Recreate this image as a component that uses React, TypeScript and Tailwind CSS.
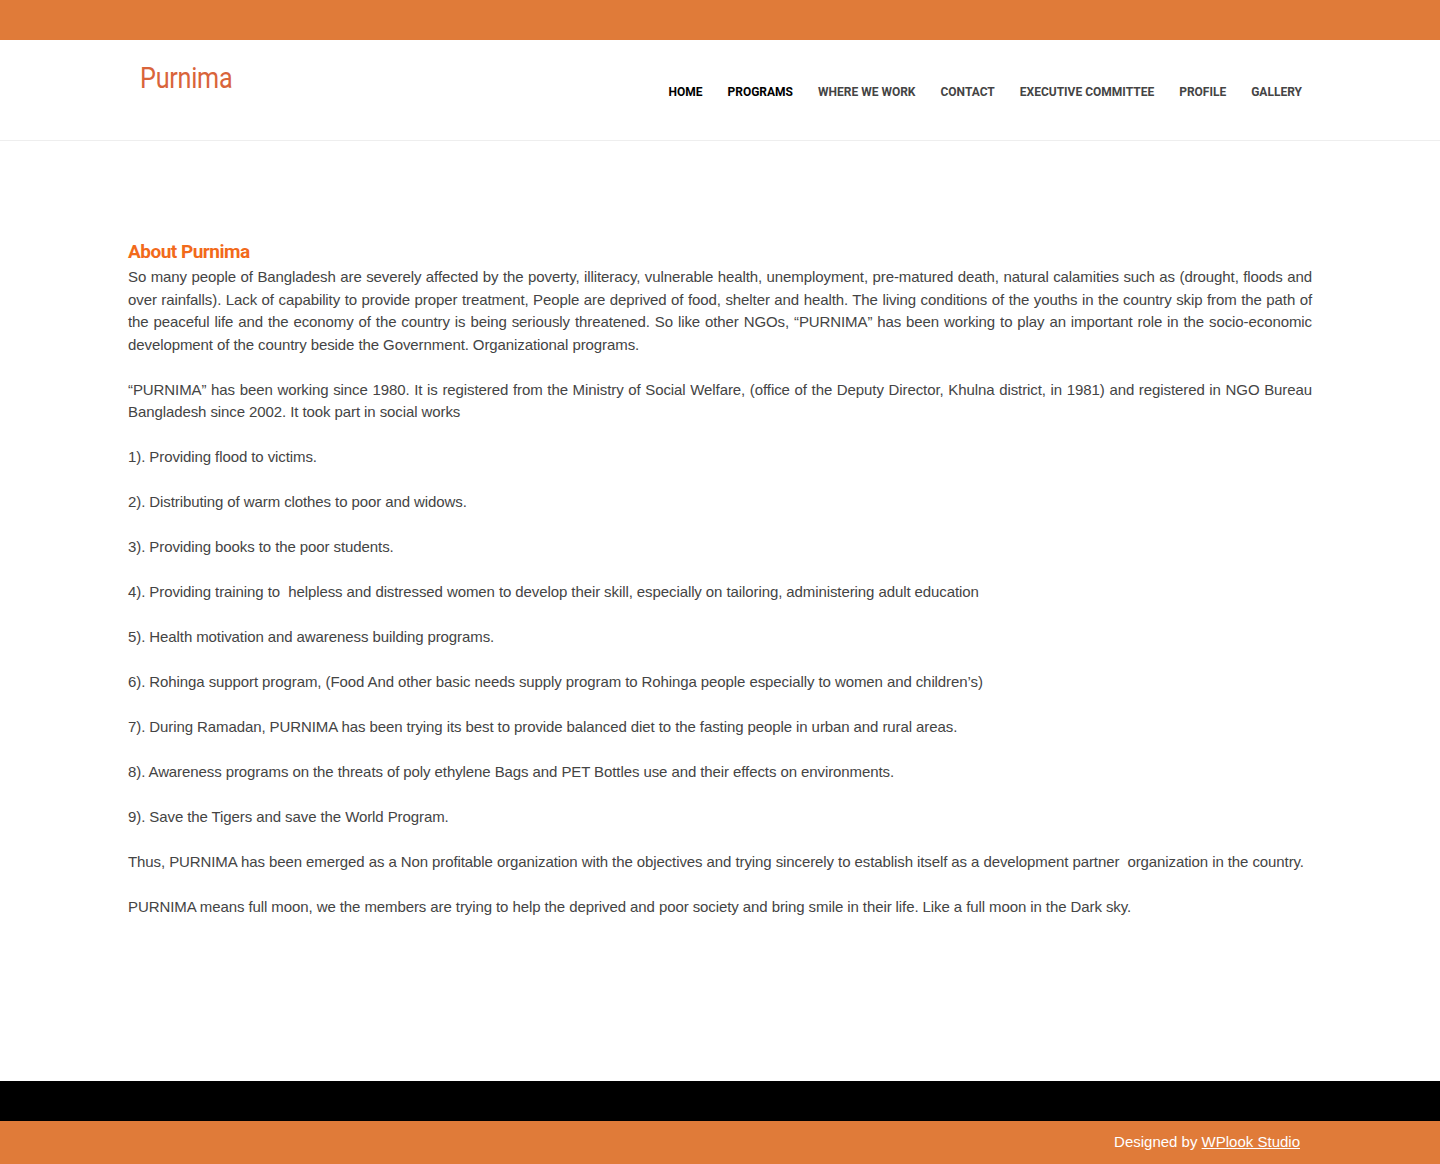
const NAV = [
  { label: "HOME", active: true },
  { label: "PROGRAMS", active: true },
  { label: "WHERE WE WORK" },
  { label: "CONTACT" },
  { label: "EXECUTIVE COMMITTEE" },
  { label: "PROFILE" },
  { label: "GALLERY" },
];

const PARAGRAPHS = [
  "So many people of Bangladesh are severely affected by the poverty, illiteracy, vulnerable health, unemployment, pre-matured death, natural calamities such as (drought, floods and over rainfalls). Lack of capability to provide proper treatment, People are deprived of food, shelter and health. The living conditions of the youths in the country skip from the path of the peaceful life and the economy of the country is being seriously threatened. So like other NGOs, \u201cPURNIMA\u201d has been working to play an important role in the socio-economic development of the country beside the Government. Organizational programs.",
  "\u201cPURNIMA\u201d has been working since 1980. It is registered from the Ministry of Social Welfare, (office of the Deputy Director, Khulna district, in 1981) and registered in NGO Bureau Bangladesh since 2002. It took part in social works",
  "1). Providing flood to victims.",
  "2). Distributing of warm clothes to poor and widows.",
  "3). Providing books to the poor students.",
  "4). Providing training to \u00a0helpless and distressed women to develop their skill, especially on tailoring, administering adult education",
  "5). Health motivation and awareness building programs.",
  "6). Rohinga support program, (Food And other basic needs supply program to Rohinga people especially to women and children\u2019s)",
  "7). During Ramadan, PURNIMA has been trying its best to provide balanced diet to the fasting people in urban and rural areas.",
  "8). Awareness programs on the threats of poly ethylene Bags and PET Bottles use and their effects on environments.",
  "9). Save the Tigers and save the World Program.",
  "Thus, PURNIMA has been emerged as a Non profitable organization with the objectives and trying sincerely to establish itself as a development partner \u00a0organization in the country.",
  "PURNIMA means full moon, we the members are trying to help the deprived and poor society and bring smile in their life. Like a full moon in the Dark sky.",
];

const narrow = "font-['Roboto',sans-serif]";

export default function App() {
  return (
    <div className="flex min-h-[1164px] flex-col bg-white font-['Liberation_Sans',Arial,sans-serif]">
      {/* Top bar */}
      <div className="h-10 bg-[#e07b39]"></div>

      {/* Header */}
      <header className="h-[101px] border-b border-[#eeeeee]">
        <div className="mx-auto flex h-full w-[1184px] items-start justify-between">
          <a className={`ml-3 mt-[20px] origin-left scale-x-[0.84] text-[30px] leading-9 tracking-[-0.3px] text-[#d9643a] ${narrow}`}>
            Purnima
          </a>
          <nav className="mr-[10px] mt-[44px] flex gap-[25px]">
            {NAV.map((item) => (
              <a
                key={item.label}
                className={`text-[12px] font-bold leading-4 ${narrow} ${
                  item.active ? "text-black" : "text-[#444444]"
                }`}
              >
                {item.label}
              </a>
            ))}
          </nav>
        </div>
      </header>

      {/* Content */}
      <main className="flex-1">
        <div className="mx-auto w-[1184px] pt-[97px] pb-10">
          <h2 className={`text-[19px] font-bold leading-7 tracking-[-0.5px] text-[#f26a1b] ${narrow}`}>
            About Purnima
          </h2>
          <div className="text-[15px] leading-[22.5px] tracking-[-0.09px] text-[#444444]">
            {PARAGRAPHS.map((p, i) => (
              <p key={i} className="mb-[22.5px] text-justify">
                {p}
              </p>
            ))}
          </div>
        </div>
      </main>

      {/* Footer */}
      <footer>
        <div className="h-10 bg-black"></div>
        <div className="h-[43px] bg-[#e07b39]">
          <div className="mx-auto flex h-full w-[1184px] items-center justify-end pr-3 text-[15px] text-white">
            Designed by&nbsp;<a className="underline">WPlook Studio</a>
          </div>
        </div>
      </footer>
    </div>
  );
}
